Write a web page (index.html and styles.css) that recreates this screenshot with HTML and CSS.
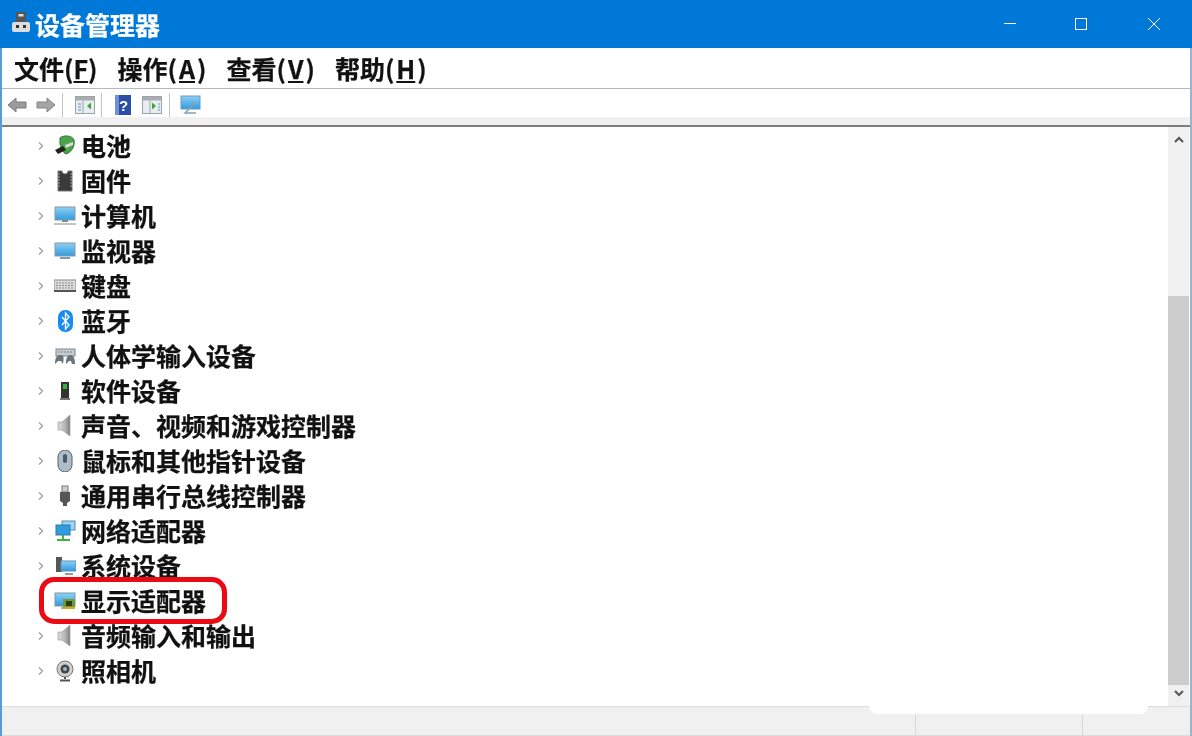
FILE: index.html
```html
<!DOCTYPE html>
<html lang="zh-CN">
<head>
<meta charset="utf-8">
<title>设备管理器</title>
<link rel="stylesheet" href="styles.css">
</head>
<body>
<svg class="defs" width="0" height="0" aria-hidden="true">
  <defs>
    <linearGradient id="screen" x1="0" y1="0" x2="0" y2="1"><stop offset="0" stop-color="#8fd0f5"/><stop offset="1" stop-color="#2f9be0"/></linearGradient>
    <linearGradient id="metal" x1="0" y1="0" x2="1" y2="0"><stop offset="0" stop-color="#dcdcdc"/><stop offset=".6" stop-color="#b4b4b4"/><stop offset="1" stop-color="#7c7c7c"/></linearGradient>
    <symbol id="chev" viewBox="0 0 8 10"><path d="M2 1.500 5.500 5 2 8.500" fill="none" stroke="#a0a0a0" stroke-width="1.300"/></symbol>
    <symbol id="speaker" viewBox="0 0 22 22"><path d="M4 7h4l8-7v21l-8-6H4z" fill="url(#metal)" stroke="#a0a0a0" stroke-width=".7"/></symbol>
    <symbol id="pane" viewBox="0 0 20 18"><rect x=".5" y=".5" width="19" height="17" fill="#e8eef0" stroke="#9aa4a8"/><rect x="1" y="1" width="18" height="3.500" fill="#a7adb0"/><path d="M8 5v12" stroke="#9aa4a8"/></symbol>
  </defs>
</svg>
<div class="window">
  <header class="titlebar">
    <svg class="app-icon" viewBox="0 0 18 20"><rect x="4" y="0" width="10" height="11" fill="#555"/><rect x="6.500" y="2" width="5" height="2.500" fill="#ddd"/><rect x="0" y="10" width="18" height="10" rx="2" fill="#dcdcdc"/><rect x="4" y="13" width="3" height="3" fill="#333"/><rect x="11" y="13" width="3" height="3" fill="#333"/></svg>
    <h1 class="title">设备管理器</h1>
    <div class="controls">
      <svg class="ctl ctl-min" viewBox="0 0 12 12"><path d="M0 5.500h12" stroke="#fff"/></svg>
      <svg class="ctl ctl-max" viewBox="0 0 12 12"><rect x=".5" y=".5" width="11" height="11" fill="none" stroke="#fff"/></svg>
      <svg class="ctl ctl-close" viewBox="0 0 12 12"><path d="M0 0l12 12M12 0 0 12" stroke="#fff"/></svg>
    </div>
  </header>
  <nav class="menubar">
    <span class="menu">文件(<u>F</u>)</span>
    <span class="menu menu-wide">操作(<u>A</u>)</span>
    <span class="menu menu-wide">查看(<u>V</u>)</span>
    <span class="menu menu-wide">帮助(<u>H</u>)</span>
  </nav>
  <div class="toolbar">
    <svg class="tool arrow" viewBox="0 0 20 16"><path d="M1 8l8-7v4h10v6H9v4z" fill="#9b9b9b" stroke="#7d7d7d"/></svg>
    <svg class="tool arrow arrow-next" viewBox="0 0 20 16"><path d="M19 8l-8-7v4H1v6h10v4z" fill="#a5a5a5" stroke="#858585"/></svg>
    <i class="sep"></i>
    <svg class="tool pane-a"><use href="#pane"/><path d="M12 10l4-3.500v7z" fill="#3da23d"/><path d="M3 8h3M3 11h3M3 14h3" stroke="#5a8fc0"/></svg>
    <i class="sep sep-b"></i>
    <svg class="tool help" viewBox="0 0 16 20"><rect width="16" height="20" fill="#2b4fa8"/><rect x="0" y="0" width="4" height="20" fill="#6f8fd8"/><text x="8.500" y="15.500" class="help-mark">?</text></svg>
    <svg class="tool pane-b"><use href="#pane"/><path d="M10 6.500l4 3.500-4 3.500z" fill="#3da23d"/><path d="M16 8h2M16 11h2M16 14h2" stroke="#5a8fc0"/></svg>
    <i class="sep sep-c"></i>
    <svg class="tool monitor-tool" viewBox="0 0 21 20"><rect x="1" y="1" width="19" height="13" fill="url(#screen)" stroke="#6a9cbc"/><path d="M12 6a3 3 0 0 1 0 5L5 18h11" fill="none" stroke="#88a0ac" stroke-width="1.500"/></svg>
  </div>
  <div class="strip"></div>
  <main class="content">
    <ul class="tree">
      <li class="row"><svg class="chev"><use href="#chev"/></svg><svg class="ico" viewBox="0 0 22 22"><path d="M6 3c3-3 12-3 14 2 1 6-2 12-8 14-3-1-5-6-6-10z" fill="#4ea24a" stroke="#2c6e2c"/><path d="M1 15l8-4 3 4-8 4z" fill="#222"/><path d="M11 10l8-3v3l-7 3z" fill="#ddd"/></svg><span class="label">电池</span></li>
      <li class="row"><svg class="chev"><use href="#chev"/></svg><svg class="ico" viewBox="0 0 22 22"><path d="M4 1h4a3 3 0 0 0 6 0h4v20H4z" fill="#3a3a3a" stroke="#777"/><path d="M4 4h14M4 7h14M4 10h14M4 13h14M4 16h14" stroke="#9a9a9a" stroke-dasharray="2 10"/></svg><span class="label">固件</span></li>
      <li class="row"><svg class="chev"><use href="#chev"/></svg><svg class="ico" viewBox="0 0 22 22"><rect x="1" y="2" width="20" height="13" fill="url(#screen)" stroke="#8a9aa4"/><path d="M8 15h6v2H8z" fill="#888"/><rect y="18" width="22" height="2" fill="#c0c4c8"/></svg><span class="label">计算机</span></li>
      <li class="row"><svg class="chev"><use href="#chev"/></svg><svg class="ico" viewBox="0 0 22 22"><rect x="1" y="3" width="20" height="13" fill="url(#screen)" stroke="#8a9aa4"/><path d="M6 18h10" stroke="#8a9aa4" stroke-width="2"/></svg><span class="label">监视器</span></li>
      <li class="row"><svg class="chev"><use href="#chev"/></svg><svg class="ico" viewBox="0 0 22 22"><rect y="5" width="22" height="11" fill="#dcdcdc" stroke="#8a8a8a"/><path d="M2 8h18M2 10.500h18M2 13h18" stroke="#8a8a8a" stroke-dasharray="2 1"/><rect y="15" width="22" height="2" fill="#555"/></svg><span class="label">键盘</span></li>
      <li class="row"><svg class="chev"><use href="#chev"/></svg><svg class="ico" viewBox="0 0 22 22"><rect x="4" y="0" width="15" height="22" rx="7" fill="#1a8cf0"/><path d="M8 7l7 8-3.500 4V3L15 7l-7 8" fill="none" stroke="#fff" stroke-width="1.300"/></svg><span class="label">蓝牙</span></li>
      <li class="row"><svg class="chev"><use href="#chev"/></svg><svg class="ico" viewBox="0 0 22 22"><rect x="2" y="4" width="19" height="7" fill="#c6ccd0" stroke="#7d858a"/><path d="M4 7h15" stroke="#7d858a" stroke-dasharray="2 1"/><path d="M1 19c0-8 3-9 6-9s3 3 2 9l-2-3H4zM12 19c0-7 2-9 4-9s5 1 5 9h-3l-1-3h-2z" fill="#68737a"/></svg><span class="label">人体学输入设备</span></li>
      <li class="row"><svg class="chev"><use href="#chev"/></svg><svg class="ico" viewBox="0 0 22 22"><rect x="7" y="2" width="8" height="17" fill="#333"/><rect x="9" y="4" width="4" height="5" fill="#35b04a"/><rect x="6" y="18" width="10" height="2" fill="#777"/></svg><span class="label">软件设备</span></li>
      <li class="row"><svg class="chev"><use href="#chev"/></svg><svg class="ico"><use href="#speaker"/></svg><span class="label">声音、视频和游戏控制器</span></li>
      <li class="row"><svg class="chev"><use href="#chev"/></svg><svg class="ico" viewBox="0 0 22 22"><rect x="4" y="0" width="14" height="22" rx="7" fill="#aebdca" stroke="#555e66"/><rect x="9" y="4" width="4" height="9" rx="2" fill="#4d5a66"/></svg><span class="label">鼠标和其他指针设备</span></li>
      <li class="row"><svg class="chev"><use href="#chev"/></svg><svg class="ico" viewBox="0 0 22 22"><rect x="8" y="1" width="6" height="6" fill="#ccc" stroke="#777"/><path d="M6 7h10v9l-3 2v3H9v-3l-3-2z" fill="#555"/></svg><span class="label">通用串行总线控制器</span></li>
      <li class="row"><svg class="chev"><use href="#chev"/></svg><svg class="ico" viewBox="0 0 22 22"><rect x="8" y="1" width="13" height="9" fill="#9fd2f0" stroke="#4f8cb3"/><rect x="2" y="5" width="14" height="10" fill="#2f9be0" stroke="#2f78a8"/><path d="M9 15v4M3 20h13" stroke="#43b043" stroke-width="2"/></svg><span class="label">网络适配器</span></li>
      <li class="row"><svg class="chev"><use href="#chev"/></svg><svg class="ico" viewBox="0 0 22 22"><rect x="2" y="2" width="6" height="15" fill="#555"/><rect x="7" y="6" width="15" height="10" fill="url(#screen)" stroke="#5a94b8"/><path d="M11 19h8" stroke="#999" stroke-width="2"/></svg><span class="label">系统设备</span></li>
      <li class="row row-marked"><svg class="ico" viewBox="0 0 22 22"><rect x="1" y="3" width="20" height="13" fill="url(#screen)" stroke="#7d97a8"/><path d="M7 18h9" stroke="#9aa" stroke-width="2"/><rect x="9" y="9" width="12" height="9" fill="#6f9a3a"/><rect x="12" y="11" width="6" height="5" fill="#2b3d1d"/><path d="M9 18h12" stroke="#d9a520" stroke-width="2"/></svg><span class="label">显示适配器</span></li>
      <li class="row"><svg class="chev"><use href="#chev"/></svg><svg class="ico"><use href="#speaker"/></svg><span class="label">音频输入和输出</span></li>
      <li class="row"><svg class="chev"><use href="#chev"/></svg><svg class="ico" viewBox="0 0 22 22"><circle cx="11" cy="9" r="8" fill="#cfcfcf" stroke="#777"/><circle cx="11" cy="9" r="4.500" fill="#444"/><circle cx="11" cy="9" r="2" fill="#9fb8c8"/><path d="M11 17v2M6 20.500h10" stroke="#555" stroke-width="2"/></svg><span class="label">照相机</span></li>
    </ul>
    <aside class="scrollbar">
      <svg class="sb-arrow" viewBox="0 0 12 8"><path d="M2 6l4-4 4 4" fill="none" stroke="#555" stroke-width="2"/></svg>
      <div class="sb-track"><div class="sb-thumb"></div></div>
      <svg class="sb-arrow" viewBox="0 0 12 8"><path d="M2 2l4 4 4-4" fill="none" stroke="#555" stroke-width="2"/></svg>
    </aside>
  </main>
  <footer class="statusbar">
    <span class="cell cell-main"></span><span class="cell cell-mid"></span><span class="cell cell-end"></span>
    <div class="notch"></div>
  </footer>
</div>
</body>
</html>
```
FILE: styles.css
```css
*, *::before { box-sizing: border-box; }
html, body { margin: 0; padding: 0; }
body {
  width: 1192px;
  height: 736px;
  overflow: hidden;
  background: #fff;
  font-family: "Noto Sans CJK SC", "Noto Sans", sans-serif;
  font-weight: 700;
  color: #111;
}
.defs { position: absolute; }
.window {
  height: 736px;
  display: flex;
  flex-direction: column;
  border-left: 2px solid #5a9bd5;
  border-right: 2px solid #8db8dc;
  filter: blur(0.35px);
}
.titlebar {
  height: 48px;
  margin: 0 -2px;
  background: #0078d7;
  display: flex;
  align-items: center;
  padding-left: 12px;
  flex: none;
}
.app-icon { width: 18px; height: 20px; margin: -4px 6px 0 0; }
.title {
  margin: 0 0 0 -1px;
  font-size: 25px;
  font-weight: 700;
  line-height: 48px;
  color: #fff;
  -webkit-text-stroke: 0.25px #fff;
}
.controls { margin-left: auto; display: flex; align-items: center; }
.ctl { width: 12px; height: 12px; display: block; }
.ctl-min { margin-right: 59px; }
.ctl-max { margin-right: 61px; }
.ctl-close { margin-right: 32px; }
.menubar {
  height: 41px;
  flex: none;
  display: flex;
  align-items: center;
  gap: 20px;
  padding-left: 12px;
  border-bottom: 1px solid #b8b8b8;
  background: #fff;
}
.menu { font-size: 25px; line-height: 40px; color: #111; -webkit-text-stroke: 0.25px #111; }
.menu u { text-underline-offset: 2px; text-decoration-thickness: 2px; }
.menu-wide u { padding: 0 2px; }
.toolbar {
  height: 28px;
  flex: none;
  display: flex;
  align-items: center;
  padding: 3px 0 0 5px;
  background: #fff;
}
.tool { display: block; flex: none; }
.arrow { width: 20px; height: 16px; }
.arrow-next { margin-left: 9px; }
.sep { display: block; width: 1px; height: 24px; background: #c4c4c4; margin-left: 6px; flex: none; }
.sep-b { margin-left: 6px; }
.sep-c { margin-left: 7px; }
.pane-a { width: 20px; height: 18px; margin-left: 12px; }
.help { width: 16px; height: 20px; margin-left: 13px; }
.help-mark { font-size: 15px; fill: #fff; text-anchor: middle; font-family: "Liberation Sans", sans-serif; font-weight: 700; }
.pane-b { width: 20px; height: 18px; margin-left: 11px; }
.monitor-tool { width: 21px; height: 20px; margin-left: 10px; }
.strip {
  height: 10px;
  flex: none;
  background: #f0f0f0;
  border-bottom: 2px solid #7c7c7c;
}
.content {
  flex: 1;
  min-height: 0;
  display: flex;
  background: #fff;
}
.tree {
  flex: 1;
  list-style: none;
  margin: 0;
  padding: 1px 0 0;
}
.row {
  height: 35px;
  display: flex;
  align-items: center;
  padding-left: 35px;
  position: relative;
}
.chev { width: 8px; height: 10px; flex: none; }
.ico { width: 22px; height: 22px; margin-left: 9px; flex: none; }
.label {
  margin-left: 5px;
  font-size: 25px;
  line-height: 35px;
  white-space: nowrap;
  color: #111;
  position: relative;
  -webkit-text-stroke: 0.25px #111;
}
.row-marked { padding-left: 52px; z-index: 1; }
.row-marked::before {
  content: "";
  position: absolute;
  left: 37px;
  top: -6px;
  width: 188px;
  height: 47px;
  background: #fff;
  border: 5px solid #ea0a14;
  border-radius: 15px;
}
.row-marked .ico { position: relative; margin-left: 0; }
.scrollbar {
  width: 21px;
  margin-right: 1px;
  flex: none;
  background: #f0f0f0;
  display: flex;
  flex-direction: column;
  align-items: center;
}
.sb-arrow { width: 12px; height: 8px; margin: 9px 0 9px; flex: none; }
.sb-track { flex: 1; width: 100%; min-height: 0; padding-top: 143px; }
.sb-thumb { height: 389px; background: #cdcdcd; }
.statusbar {
  height: 30px;
  flex: none;
  display: flex;
  position: relative;
  background: #f0f0f0;
  border-top: 1px solid #dcdcdc;
  border-bottom: 1px solid #dcdcdc;
}
.cell { display: block; height: 100%; border-right: 1px solid #d8d8d8; }
.cell-main { width: 914px; }
.cell-mid { width: 167px; }
.cell-end { flex: 1; border-right: 0; }
.notch {
  position: absolute;
  left: 867px;
  top: -1px;
  width: 279px;
  height: 8px;
  background: #fff;
  border-radius: 0 0 14px 14px;
}
```
